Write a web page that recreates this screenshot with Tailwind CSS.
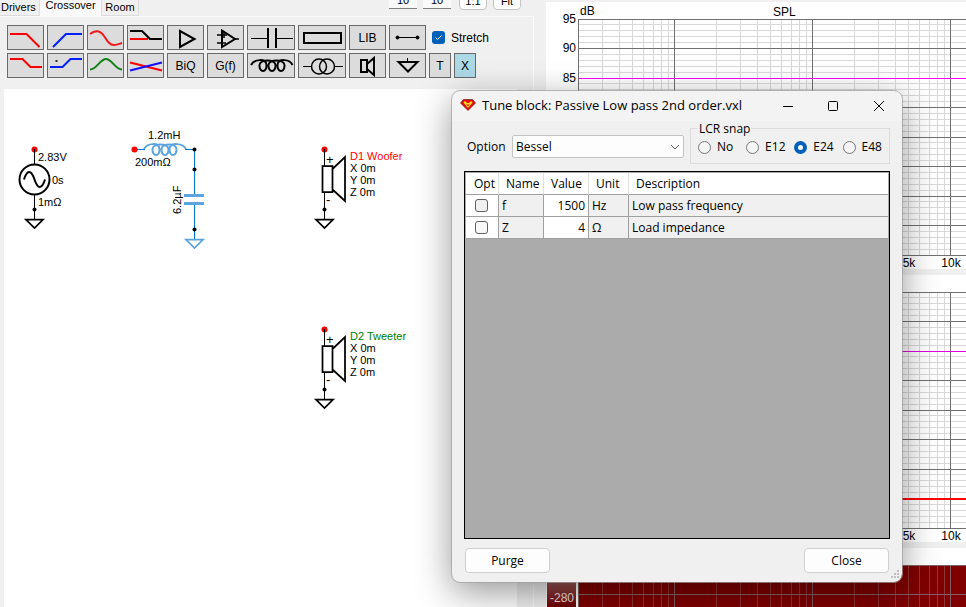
<!DOCTYPE html>
<html lang="en">
<head>
<meta charset="utf-8">
<title>Crossover designer</title>
<script src="https://cdn.jsdelivr.net/npm/@tailwindcss/browser@4"></script>
</head>
<body class="relative flex h-screen overflow-hidden bg-[#f0f0f0] font-['Liberation_Sans',sans-serif] text-xs text-black">

<!-- Schematic side -->
<section class="flex w-[546px] shrink-0 flex-col pr-3">
  <header class="flex h-4 shrink-0 justify-between">
    <nav class="flex h-4 items-start text-[11px] leading-[14px]">
      <a href="#drivers" class="h-4 w-10 border-r border-b border-[#dcdcdc] pl-px">Drivers</a>
      <a href="#crossover" class="-mt-0.5 h-[18px] w-[61px] bg-[#f9f9f9] text-center">Crossover</a>
      <a href="#room" class="h-4 w-[38px] border-x border-b border-[#dcdcdc] text-center">Room</a>
    </nav>
    <div class="-mt-2 mr-[13px] flex h-[17px] gap-1.5 text-[11px] leading-4">
      <button class="h-[17px] w-7 border-b border-[#808080] bg-[#f9f9f9]">10</button>
      <button class="h-[17px] w-7 border-b border-[#808080] bg-[#f9f9f9]">10</button>
      <button class="ml-0.5 h-[18px] w-7 rounded-sm border border-[#c4c4c4] bg-[#fdfdfd]">1:1</button>
      <button class="h-[18px] w-7 rounded-sm border border-[#c4c4c4] bg-[#fdfdfd]">Fit</button>
    </div>
  </header>

  <div class="flex min-h-0 grow flex-col border-t border-r border-[#fafafa]">
    <div class="flex flex-col gap-[3px] pt-2 pl-[7px] pb-[11px]">
      <div class="flex gap-[3px]">
        <button aria-label="Low pass" class="h-[25px] w-[37px] border border-[#696969] bg-[#dcdcdc]"><svg class="block h-[23px] w-[35px]" fill="none" stroke="#f00" stroke-width="2"><path d="M2 8H18.500L31.500 21"/></svg></button>
        <button aria-label="High pass" class="h-[25px] w-[37px] border border-[#696969] bg-[#dcdcdc]"><svg class="block h-[23px] w-[35px]" fill="none" stroke="#0020ff" stroke-width="2"><path d="M5 21L18 8H34"/></svg></button>
        <button aria-label="All pass" class="h-[25px] w-[37px] border border-[#696969] bg-[#dcdcdc]"><svg class="block h-[23px] w-[35px]" fill="none" stroke="#f01818" stroke-width="2"><path d="M2 8C7 4 12 4 16 10C20 16 22 19 26 19C29 19 31 18 34 17"/></svg></button>
        <button aria-label="Shelf pair" class="h-[25px] w-[37px] border border-[#696969] bg-[#dcdcdc]"><svg class="block h-[23px] w-[35px]" fill="none" stroke="#000" stroke-width="2"><path stroke="#f00" d="M2 13H20"/><path d="M2 5H14L22 13H34"/></svg></button>
        <button aria-label="Buffer" class="h-[25px] w-[37px] border border-[#696969] bg-[#dcdcdc]"><svg class="block h-[23px] w-[35px]" fill="none" stroke="#000" stroke-width="2"><path d="M12 5V21L26.500 13Z"/></svg></button>
        <button aria-label="Op amp" class="h-[25px] w-[37px] border border-[#696969] bg-[#dcdcdc]"><svg class="block h-[23px] w-[35px]" fill="none" stroke="#000" stroke-width="1.500"><path stroke-width="2" d="M14 4.500V21L27 13Z"/><path d="M9 9H19M9 17H18M16 6V12M27 13H31"/></svg></button>
        <button aria-label="Capacitor" class="h-[25px] w-[48px] border border-[#696969] bg-[#dcdcdc]"><svg class="block h-[23px] w-[46px]" fill="none" stroke="#000"><path d="M3 12.500H20M28 12.500H45"/><path stroke-width="2" d="M20 2V22M28 2V22"/></svg></button>
        <button aria-label="Resistor" class="h-[25px] w-[48px] border border-[#696969] bg-[#dcdcdc]"><svg class="block h-[23px] w-[46px]" fill="none" stroke="#000" stroke-width="2"><path d="M5 7H42V17H5Z"/></svg></button>
        <button class="h-[25px] w-[37px] border border-[#696969] bg-[#dcdcdc]">LIB</button>
        <button aria-label="Wire" class="h-[25px] w-[37px] border border-[#696969] bg-[#dcdcdc]"><svg class="block h-[23px] w-[35px]" stroke="#000"><path d="M7 11.500H28"/><circle cx="7.500" cy="11.500" r="1.500"/><circle cx="27.500" cy="11.500" r="1.500"/></svg></button>
        <label class="ml-[3px] flex items-center gap-1.5"><span class="grid h-[13px] w-[13px]"><input type="checkbox" checked class="col-start-1 row-start-1 h-[13px] w-[13px] appearance-none rounded-[3px] bg-[#005fb8]"><svg class="pointer-events-none col-start-1 row-start-1 h-[13px] w-[13px]" fill="none" stroke="#fff"><path d="M3.500 6.500L5.500 8.500L9.500 4.500"/></svg></span>Stretch</label>
      </div>
      <div class="flex gap-[3px]">
        <button aria-label="Low shelf" class="h-[25px] w-[37px] border border-[#696969] bg-[#dcdcdc]"><svg class="block h-[23px] w-[35px]" fill="none" stroke="#f00" stroke-width="2"><path d="M2 5H14.500L22.500 13H34"/></svg></button>
        <button aria-label="High shelf" class="h-[25px] w-[37px] border border-[#696969] bg-[#dcdcdc]"><svg class="block h-[23px] w-[35px]" fill="none" stroke="#0020ff" stroke-width="2"><path d="M2 13H14.500L22.500 5H34"/><path stroke="#333" d="M7.500 7H9.500"/></svg></button>
        <button aria-label="Peak" class="h-[25px] w-[37px] border border-[#696969] bg-[#dcdcdc]"><svg class="block h-[23px] w-[35px]" fill="none" stroke="#108018" stroke-width="2"><path d="M2 15.500C9 15.500 12 5 18 5C24 5 27 15.500 34 15.500"/></svg></button>
        <button aria-label="Crossfade" class="h-[25px] w-[37px] border border-[#696969] bg-[#dcdcdc]"><svg class="block h-[23px] w-[35px]" fill="none" stroke-width="2"><path stroke="#f00" d="M2 8.500L34 16.500"/><path stroke="#1010ff" d="M2 16.500L34 8.500"/></svg></button>
        <button class="h-[25px] w-[37px] border border-[#696969] bg-[#dcdcdc]">BiQ</button>
        <button class="h-[25px] w-[37px] border border-[#696969] bg-[#dcdcdc]">G(f)</button>
        <button aria-label="Inductor" class="h-[25px] w-[48px] border border-[#696969] bg-[#dcdcdc]"><svg class="block h-[23px] w-[46px]" fill="none" stroke="#000" stroke-width="2"><path d="M3 11C6 5 18 4 18.500 11C19 19 11 19 11.500 11C12 5 27 5 27.500 11C28 19 20 19 20.500 11C21 5 36 5 36.500 11C37 19 29 19 29.500 11C30 4 42 5 44.500 11"/></svg></button>
        <button aria-label="Transformer" class="h-[25px] w-[48px] border border-[#696969] bg-[#dcdcdc]"><svg class="block h-[23px] w-[46px]" fill="none" stroke="#000" stroke-width="1.500"><path stroke-width="1" d="M4 12.500H12M36 12.500H44"/><circle cx="20" cy="12.500" r="7.500"/><circle cx="28" cy="12.500" r="7.500"/></svg></button>
        <button aria-label="Speaker" class="h-[25px] w-[37px] border border-[#696969] bg-[#dcdcdc]"><svg class="block h-[23px] w-[35px]" fill="none" stroke="#000" stroke-width="2"><path d="M11 6H17V18H11ZM17 10L24 4V21L17 15"/></svg></button>
        <button aria-label="Ground" class="h-[25px] w-[37px] border border-[#696969] bg-[#dcdcdc]"><svg class="block h-[23px] w-[35px]" fill="none" stroke="#000" stroke-width="2"><path stroke-width="1" d="M17.500 4V8"/><path d="M8.500 8H27.500L18 17.500Z"/></svg></button>
        <button class="h-[25px] w-[22px] border border-[#696969] bg-[#dcdcdc]">T</button>
        <button class="h-[25px] w-[22px] border border-[#696969] bg-[#add8e6]">X</button>
      </div>
    </div>

    <div class="ml-1 mr-4 min-h-0 grow overflow-hidden bg-white">
      <svg class="block h-full w-full text-[11px]" role="img" aria-label="Crossover schematic">
        <defs>
          <g id="gnd" fill="none" stroke-width="1.750"><path d="M-8 .5H9L.5 9Z"/></g>
          <g id="speaker" fill="none" stroke="#000" stroke-width="1.750">
            <circle cx=".5" cy=".5" r="3" fill="#f00" stroke="none"/>
            <path stroke-width="1" d="M.5 0V17M.5 43V70"/>
            <path d="M-1.500 17H8.500V43H-1.500ZM8.500 20L21 8V52L8.500 40.500"/>
            <circle cx=".5" cy="60.500" r="2" fill="#000" stroke="none"/>
            <use href="#gnd" x="0" y="70"/>
          </g>
        </defs>
        <!-- Source -->
        <g fill="none" stroke="#000">
          <circle cx="30.500" cy="60.500" r="3" fill="#f00" stroke="none"/>
          <path d="M30.500 60V75M30.500 106V130"/>
          <circle cx="30.500" cy="90.500" r="15" stroke-width="2"/>
          <path stroke-width="2" d="M20 90.500C23 81 27 80 30.500 90.500C34 101 38 100 41 90.500"/>
          <circle cx="30.500" cy="120.500" r="2" fill="#000" stroke="none"/>
          <use href="#gnd" x="30" y="130"/>
        </g>
        <text x="34" y="72">2.83V</text><text x="48" y="95">0s</text><text x="34" y="117">1mΩ</text>
        <!-- Low pass filter -->
        <g fill="none" stroke="#0078d0">
          <path d="M130 60.500H141M181 60.500H190.500V106M190.500 115V150"/>
          <path stroke="#5aa5e0" stroke-width="2" d="M140 60C143 54 155 53 155.500 60C156 68 148 68 148.500 60C149 54 164 54 164.500 60C165 68 157 68 157.500 60C158 54 172 54 172.500 60C173 68 165 68 165.500 60C166 53 179 54 182 60"/>
          <path stroke="#5aa5e0" stroke-width="3" d="M180 106.500H200M180 114.500H200"/>
          <g stroke="#5aa5e0"><use href="#gnd" x="190" y="150"/></g>
          <circle cx="130.500" cy="60.500" r="3" fill="#f00" stroke="none"/>
          <g fill="#000" stroke="none"><circle cx="190.500" cy="60.500" r="2"/><circle cx="190.500" cy="80.500" r="2"/><circle cx="190.500" cy="140.500" r="2"/></g>
        </g>
        <text x="144" y="50">1.2mH</text><text x="131" y="77">200mΩ</text>
        <text transform="translate(177 125) rotate(-90)">6.2µF</text>
        <!-- Drivers -->
        <use href="#speaker" x="320" y="60"/>
        <g font-size="13"><text x="322" y="75">+</text><text x="322" y="115">-</text></g>
        <text x="346" y="71" fill="#f00">D1 Woofer</text><text x="346" y="83">X 0m</text><text x="346" y="95">Y 0m</text><text x="346" y="107">Z 0m</text>
        <use href="#speaker" x="320" y="240"/>
        <g font-size="13"><text x="322" y="255">+</text><text x="322" y="295">-</text></g>
        <text x="346" y="251" fill="#008000">D2 Tweeter</text><text x="346" y="263">X 0m</text><text x="346" y="275">Y 0m</text><text x="346" y="287">Z 0m</text>
      </svg>
    </div>
  </div>
</section>

<!-- Charts -->
<section class="flex min-w-0 grow flex-col gap-1.5 pt-0.5">
  <svg class="block h-[267px] w-full shrink-0 bg-white" role="img" aria-label="SPL chart">
    <g data-grid="236"></g>
    <path stroke="#f0f" d="M33 76.500H3000"/>
    <text x="34" y="13">dB</text><text x="227" y="14">SPL</text>
    <g text-anchor="end"><text x="30" y="21">95</text><text x="30" y="50">90</text><text x="30" y="80">85</text></g>
    <g text-anchor="middle"><text x="363" y="265">5k</text><text x="405" y="265">10k</text></g>
  </svg>
  <svg class="block h-[267px] w-full shrink-0 bg-white" role="img" aria-label="Response chart">
    <g data-grid="236"></g>
    <path stroke="#e000e0" d="M33 76.500H3000"/>
    <path stroke="#f00" stroke-width="2" d="M33 224H3000"/>
    <g text-anchor="middle"><text x="363" y="265">5k</text><text x="405" y="265">10k</text></g>
  </svg>
  <svg class="block min-h-0 w-full grow bg-white" role="img" aria-label="Phase chart">
    <defs><linearGradient id="scale" x1="0" y1="0" x2="0" y2="1"><stop offset="0" stop-color="#b09090"/><stop offset="1" stop-color="#700000"/></linearGradient></defs>
    <rect x="1" y="17" width="29" height="42" fill="url(#scale)"/>
    <rect x="32" y="17" width="3000" height="300" fill="#800000"/>
    <g data-grid="300" data-dark></g>
    <text x="28" y="54" text-anchor="end" fill="#f0e0e0">-280</text>
  </svg>
</section>

<!-- Tune dialog -->
<section role="dialog" aria-labelledby="dlg-title" class="absolute top-[91px] left-[452px] flex h-[491px] w-[450px] flex-col rounded-lg bg-[#f0f0f0] font-['Open_Sans',sans-serif] text-[12px] shadow-[0_10px_36px_rgba(0,0,0,0.42)] outline outline-[#a0a0a0]/70">
  <header class="flex h-[30px] shrink-0 items-center rounded-t-lg bg-[#f3f3f3] pl-2">
    <svg class="h-4 w-4" viewBox="0 0 16 16"><path fill="#e01010" stroke="#801010" stroke-width=".7" d="M3.500 1.500H12.500L15.500 5L8 12.500L.5 5Z"/><path fill="#ffe020" d="M3.500 4.500L5 3L7 5H9L11 3L12.500 4.500L8 10Z"/><path fill="#e01010" d="M5.500 5L7 6.500H9L10.500 5L8 8.500Z"/></svg>
    <h1 id="dlg-title" class="ml-1.5 grow text-[13px] whitespace-nowrap">Tune block: Passive Low pass 2nd order.vxl</h1>
    <button aria-label="Minimize" class="h-[29px] w-[46px]"><svg class="mx-auto block h-3 w-3" fill="none" stroke="#000"><path d="M2 6.500H12"/></svg></button>
    <button aria-label="Maximize" class="h-[29px] w-[46px]"><svg class="mx-auto block h-3 w-3" fill="none" stroke="#000"><rect x="1.500" y="1.500" width="9" height="9" rx="1"/></svg></button>
    <button aria-label="Close window" class="h-[29px] w-[46px]"><svg class="mx-auto block h-3 w-3" fill="none" stroke="#000"><path d="M1 1L11 11M11 1L1 11"/></svg></button>
  </header>

  <div class="flex min-h-0 grow flex-col px-3 pb-[9px]">
    <div class="flex h-[50px] shrink-0 items-start">
      <div class="mt-[14px] flex h-[23px] items-center">
        <label for="option" class="ml-[3px] w-[45px]">Option</label>
        <div class="grid w-[172px]">
          <select id="option" class="col-start-1 row-start-1 h-[23px] appearance-none rounded-xs border border-[#c4c4c4] bg-[#fdfdfd] pl-[3px]"><option>Bessel</option></select>
          <svg class="pointer-events-none col-start-1 row-start-1 mr-1 h-2.5 w-2.5 self-center justify-self-end" fill="none" stroke="#606060"><path d="M1 3L5 7L9 3"/></svg>
        </div>
      </div>
      <fieldset class="ml-1.5 h-[43px] min-w-0 grow border border-[#dcdcdc] px-[7px]">
        <legend class="h-[14px] px-px leading-4">LCR snap</legend>
        <div class="flex items-center justify-between leading-6">
          <label class="flex items-center gap-1.5"><input type="radio" name="snap" class="h-[13px] w-[13px] appearance-none rounded-full border border-[#767676] bg-[#f5f5f5] checked:border-4 checked:border-[#005fb8] checked:bg-white">No</label>
          <label class="ml-1 flex items-center gap-1.5"><input type="radio" name="snap" class="h-[13px] w-[13px] appearance-none rounded-full border border-[#767676] bg-[#f5f5f5] checked:border-4 checked:border-[#005fb8] checked:bg-white">E12</label>
          <label class="flex items-center gap-1.5"><input type="radio" name="snap" checked class="h-[13px] w-[13px] appearance-none rounded-full border border-[#767676] bg-[#f5f5f5] checked:border-4 checked:border-[#005fb8] checked:bg-white">E24</label>
          <label class="flex items-center gap-1.5"><input type="radio" name="snap" class="h-[13px] w-[13px] appearance-none rounded-full border border-[#767676] bg-[#f5f5f5] checked:border-4 checked:border-[#005fb8] checked:bg-white">E48</label>
        </div>
      </fieldset>
    </div>

    <div class="min-h-0 grow border border-black bg-[#ababab] p-px">
      <table class="w-full table-fixed border-separate border-spacing-0">
        <thead>
          <tr class="h-[22px] bg-white text-left">
            <th class="w-[33px] border-r border-b border-[#a0a0a0] border-r-[#e0e0e0] p-0 pl-2 font-normal">Opt</th>
            <th class="w-[45px] border-r border-b border-[#a0a0a0] border-r-[#e0e0e0] p-0 pl-[7px] font-normal">Name</th>
            <th class="w-[45px] border-r border-b border-[#a0a0a0] border-r-[#e0e0e0] p-0 pl-[7px] font-normal">Value</th>
            <th class="w-[40px] border-r border-b border-[#a0a0a0] border-r-[#e0e0e0] p-0 pl-[7px] font-normal">Unit</th>
            <th class="border-b border-[#a0a0a0] p-0 pl-[7px] font-normal">Description</th>
          </tr>
        </thead>
        <tbody>
          <tr class="h-[22px] bg-[#f0f0f0]">
            <td class="border-r border-b border-[#a0a0a0] bg-white p-0 pl-[9px]"><input type="checkbox" aria-label="Optimize f" class="block h-[13px] w-[13px] appearance-none rounded-[3px] border border-[#606060] bg-[#f0f0f0]"></td>
            <td class="border-r border-b border-[#a0a0a0] p-0 pl-[3px]">f</td>
            <td class="border-r border-b border-[#a0a0a0] bg-white p-0 pr-[3px] text-right">1500</td>
            <td class="border-r border-b border-[#a0a0a0] p-0 pl-[3px]">Hz</td>
            <td class="border-b border-[#a0a0a0] p-0 pl-[3px]">Low pass frequency</td>
          </tr>
          <tr class="h-[22px] bg-[#f0f0f0]">
            <td class="border-r border-b border-[#a0a0a0] bg-white p-0 pl-[9px]"><input type="checkbox" aria-label="Optimize Z" class="block h-[13px] w-[13px] appearance-none rounded-[3px] border border-[#606060] bg-[#f8f8f8]"></td>
            <td class="border-r border-b border-[#a0a0a0] p-0 pl-[3px]">Z</td>
            <td class="border-r border-b border-[#a0a0a0] bg-white p-0 pr-[3px] text-right">4</td>
            <td class="border-r border-b border-[#a0a0a0] p-0 pl-[3px]">Ω</td>
            <td class="border-b border-[#a0a0a0] p-0 pl-[3px]">Load impedance</td>
          </tr>
        </tbody>
      </table>
    </div>

    <footer class="flex shrink-0 justify-between px-px pt-[9px]">
      <button class="h-[25px] w-[85px] rounded border border-[#d0d0d0] bg-[#fdfdfd]">Purge</button>
      <button class="h-[25px] w-[85px] rounded border border-[#d0d0d0] bg-[#fdfdfd]">Close</button>
    </footer>
  </div>
  <svg class="absolute right-0.5 bottom-0.5 h-2.5 w-2.5" fill="#bfbfbf"><path d="M7 0h2v2h-2zM4 3h2v2h-2zM7 3h2v2h-2zM1 6h2v2h-2zM4 6h2v2h-2zM7 6h2v2h-2z"/></svg>
</section>

<script>
  // Logarithmic frequency grid: 20 Hz at the left edge, 138 px per decade, 5 dB per 29.5 px.
  const left = 32, top0 = 17, decade = 138;
  document.querySelectorAll('[data-grid]').forEach(g => {
    const h = +g.dataset.grid, dark = 'dark' in g.dataset;
    let minor = '', major = '';
    for (let i = 0; i * 29.5 <= h * 5; i++) {
      const y = Math.floor(top0 + i * 5.9) + 0.5;
      if (y > top0 + h + 1) break;
      if (i % 5 === 0) major += `M${left} ${y}H3000`;
      else if (!dark) minor += `M${left} ${y}H3000`;
    }
    for (let p = 1; p < 12; p++) for (let m = 1; m < 10; m++) {
      const f = m * 10 ** p;
      if (f < 20) continue;
      const x = Math.floor(left + decade * Math.log10(f / 20)) + 0.5;
      const line = `M${x} ${top0}V${top0 + h}`;
      if (m === 1 || f === 20) major += line; else minor += line;
    }
    g.innerHTML = `<path d="${minor}" stroke="${dark ? '#8f3535' : '#d9d9d9'}"/><path d="${major}" stroke="${dark ? '#806060' : '#707070'}"/>`;
  });
</script>
</body>
</html>
